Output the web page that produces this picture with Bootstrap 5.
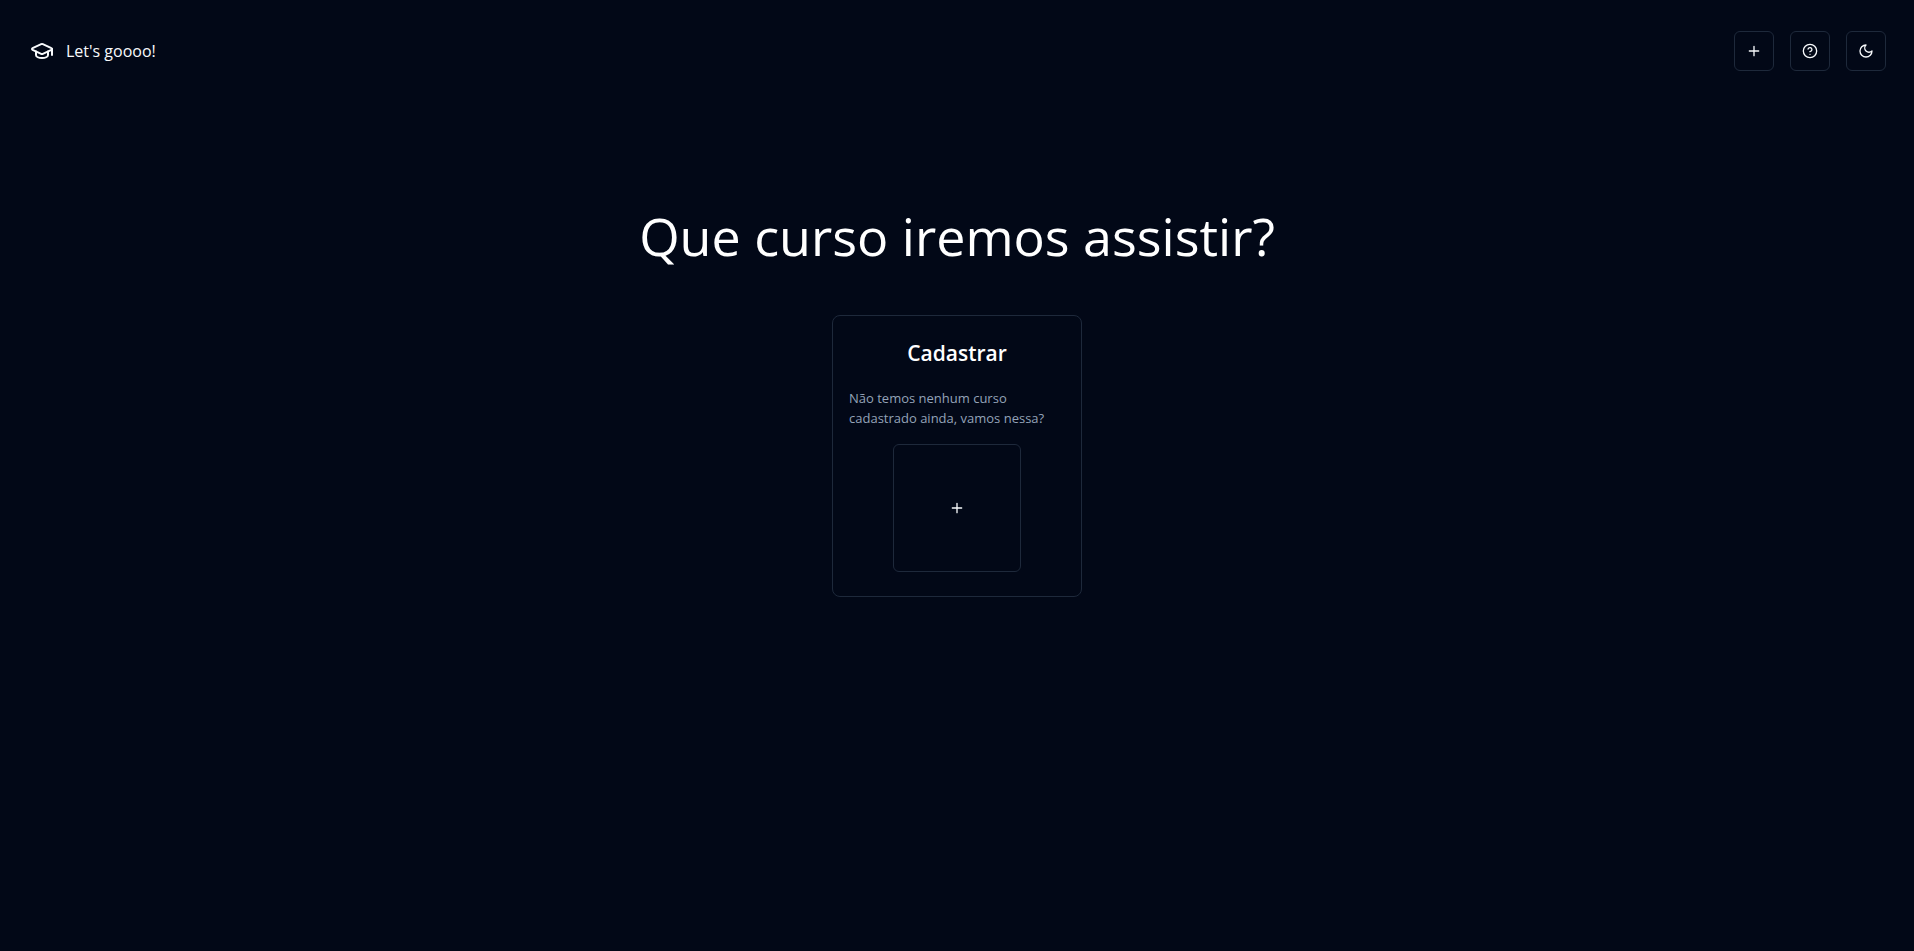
<!DOCTYPE html>
<html lang="pt-BR" data-bs-theme="dark">
<head>
<meta charset="utf-8">
<meta name="viewport" content="width=device-width, initial-scale=1">
<title>Let's goooo!</title>
<link href="https://cdn.jsdelivr.net/npm/bootstrap@5.3.0/dist/css/bootstrap.min.css" rel="stylesheet">
<style>
  body { background: #020817; color: #f8fafc; font-family: "Segoe UI", "Open Sans", "Noto Sans", sans-serif; }
  .site-header { padding: 31px 28px 0 30px; }
  .brand { color: #f8fafc; gap: 12px; }
  .btn-outline { --bs-btn-color: #f8fafc; --bs-btn-border-color: #1e293b; --bs-btn-border-radius: 6px; --bs-btn-hover-color: #f8fafc; --bs-btn-hover-bg: #1e293b; --bs-btn-hover-border-color: #1e293b; }
  .btn-square { width: 40px; height: 40px; }
  .btn-tile { width: 128px; height: 128px; }
  .page-title { font-size: 52px; line-height: 60px; margin: 135px 0 49px; font-weight: 400; }
  .course-card { width: 250px; --bs-card-bg: transparent; --bs-card-border-color: #1e293b; --bs-card-border-radius: 8px; }
  .course-card .card-body { padding: 24px 16px; }
  .course-title { font-size: 21px; line-height: 26px; font-weight: 600; margin-bottom: 22px; }
  .course-text { color: #94a3b8; font-size: 13px; line-height: 20px; margin-bottom: 16px; }
  .icon { fill: none; stroke: currentColor; stroke-width: 2; stroke-linecap: round; stroke-linejoin: round; }
</style>
</head>
<body>
<header class="site-header d-flex justify-content-between align-items-center">
  <a class="brand d-flex align-items-center text-decoration-none" href="#">
    <svg class="icon" width="24" height="24" viewBox="0 0 24 24" aria-hidden="true"><path d="M21.420 10.922a1 1 0 0 0-.019-1.838L12.830 5.180a2 2 0 0 0-1.660 0L2.600 9.080a1 1 0 0 0 0 1.832l8.570 3.908a2 2 0 0 0 1.660 0z"/><path d="M22 10v6M6 12.500V16a6 3 0 0 0 12 0v-3.500"/></svg>
    <span>Let's goooo!</span>
  </a>
  <nav class="d-flex gap-3" aria-label="Ações">
    <button type="button" class="btn btn-outline btn-square p-0 d-flex align-items-center justify-content-center" aria-label="Adicionar">
      <svg class="icon" width="16" height="16" viewBox="0 0 24 24" aria-hidden="true"><path d="M5 12h14M12 5v14"/></svg>
    </button>
    <button type="button" class="btn btn-outline btn-square p-0 d-flex align-items-center justify-content-center" aria-label="Ajuda">
      <svg class="icon" width="16" height="16" viewBox="0 0 24 24" aria-hidden="true"><circle cx="12" cy="12" r="10"/><path d="M9.090 9a3 3 0 0 1 5.830 1c0 2-3 3-3 3M12 17h.01"/></svg>
    </button>
    <button type="button" class="btn btn-outline btn-square p-0 d-flex align-items-center justify-content-center" aria-label="Tema escuro">
      <svg class="icon" width="16" height="16" viewBox="0 0 24 24" aria-hidden="true"><path d="M12 3a6 6 0 0 0 9 9 9 9 0 1 1-9-9Z"/></svg>
    </button>
  </nav>
</header>
<main class="d-flex flex-column align-items-center px-3">
  <h1 class="page-title text-center">Que curso iremos assistir?</h1>
  <section class="card course-card">
    <div class="card-body d-flex flex-column align-items-center">
      <h2 class="course-title">Cadastrar</h2>
      <p class="course-text align-self-stretch">Não temos nenhum curso cadastrado ainda, vamos nessa?</p>
      <button type="button" class="btn btn-outline btn-tile p-0 d-flex align-items-center justify-content-center" aria-label="Cadastrar curso">
        <svg class="icon" width="16" height="16" viewBox="0 0 24 24" aria-hidden="true"><path d="M5 12h14M12 5v14"/></svg>
      </button>
    </div>
  </section>
</main>
<script src="https://cdn.jsdelivr.net/npm/bootstrap@5.3.0/dist/js/bootstrap.bundle.min.js"></script>
</body>
</html>
